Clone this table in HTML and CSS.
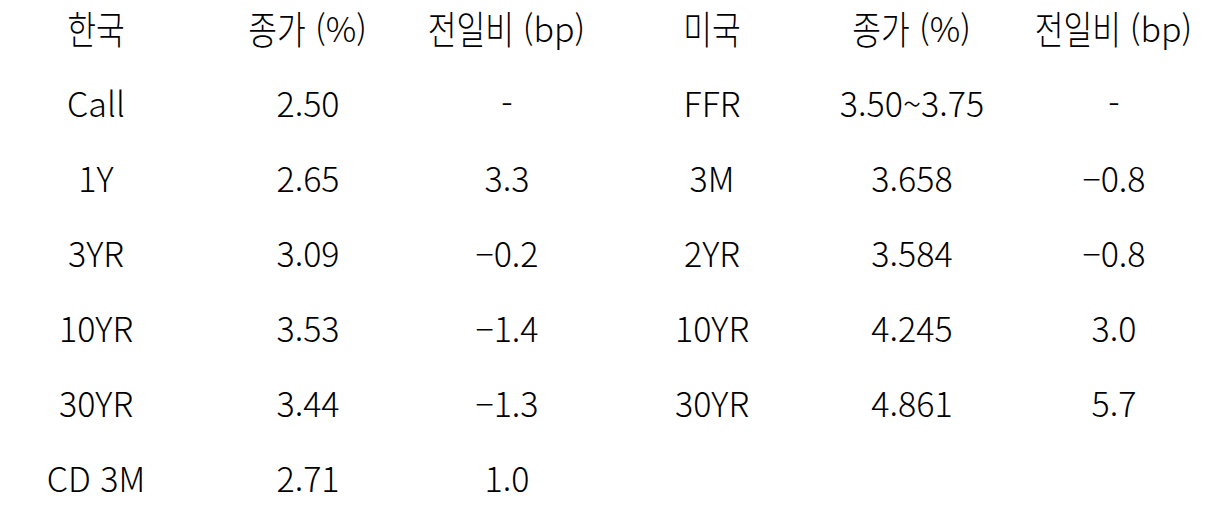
FILE: index.html
```html
<!DOCTYPE html>
<html lang="ko">
<head>
<meta charset="utf-8">
<title>금리</title>
<link rel="stylesheet" href="styles.css">
</head>
<body>
<div class="rates">
  <div class="cell head"><span class="ko ko2">한국</span></div>
  <div class="cell head"><span class="ko ko2">종가</span> (%)</div>
  <div class="cell head"><span class="ko ko3">전일비</span> (bp)</div>
  <div class="cell head"><span class="ko ko2">미국</span></div>
  <div class="cell head"><span class="ko ko2">종가</span> (%)</div>
  <div class="cell head last"><span class="ko ko3">전일비</span> (bp)</div>

  <div class="cell">Call</div>
  <div class="cell">2.50</div>
  <div class="cell">-</div>
  <div class="cell">FFR</div>
  <div class="cell">3.50~3.75</div>
  <div class="cell last">-</div>

  <div class="cell">1Y</div>
  <div class="cell">2.65</div>
  <div class="cell">3.3</div>
  <div class="cell">3M</div>
  <div class="cell">3.658</div>
  <div class="cell last">−0.8</div>

  <div class="cell">3YR</div>
  <div class="cell">3.09</div>
  <div class="cell">−0.2</div>
  <div class="cell">2YR</div>
  <div class="cell">3.584</div>
  <div class="cell last">−0.8</div>

  <div class="cell">10YR</div>
  <div class="cell">3.53</div>
  <div class="cell">−1.4</div>
  <div class="cell">10YR</div>
  <div class="cell">4.245</div>
  <div class="cell last">3.0</div>

  <div class="cell">30YR</div>
  <div class="cell">3.44</div>
  <div class="cell">−1.3</div>
  <div class="cell">30YR</div>
  <div class="cell">4.861</div>
  <div class="cell last">5.7</div>

  <div class="cell">CD 3M</div>
  <div class="cell">2.71</div>
  <div class="cell">1.0</div>
  <div class="cell"></div>
  <div class="cell"></div>
  <div class="cell last"></div>
</div>
</body>
</html>
```

FILE: styles.css
```css
html, body {
  margin: 0;
  padding: 0;
  background: #ffffff;
  overflow: hidden;
}

body {
  font-family: "Noto Sans CJK KR", "Noto Sans", sans-serif;
  font-size: 34px;
  font-weight: 300;
  color: #000000;
}

.rates {
  display: grid;
  grid-template-columns: 192px 232px 166px 244px 156px 232px;
  grid-auto-rows: 75px;
  margin-top: -10px;
}

.cell {
  display: flex;
  align-items: center;
  justify-content: center;
  line-height: 40px;
  white-space: pre;
}

.cell.last {
  padding-left: 16px;
}

.ko {
  display: inline-block;
  font-size: 1.15em;
  line-height: 1;
  transform: scaleX(0.8);
  transform-origin: center;
}

.ko2 {
  margin: 0 -0.2em;
}

.ko3 {
  margin: 0 -0.3em;
}
```
